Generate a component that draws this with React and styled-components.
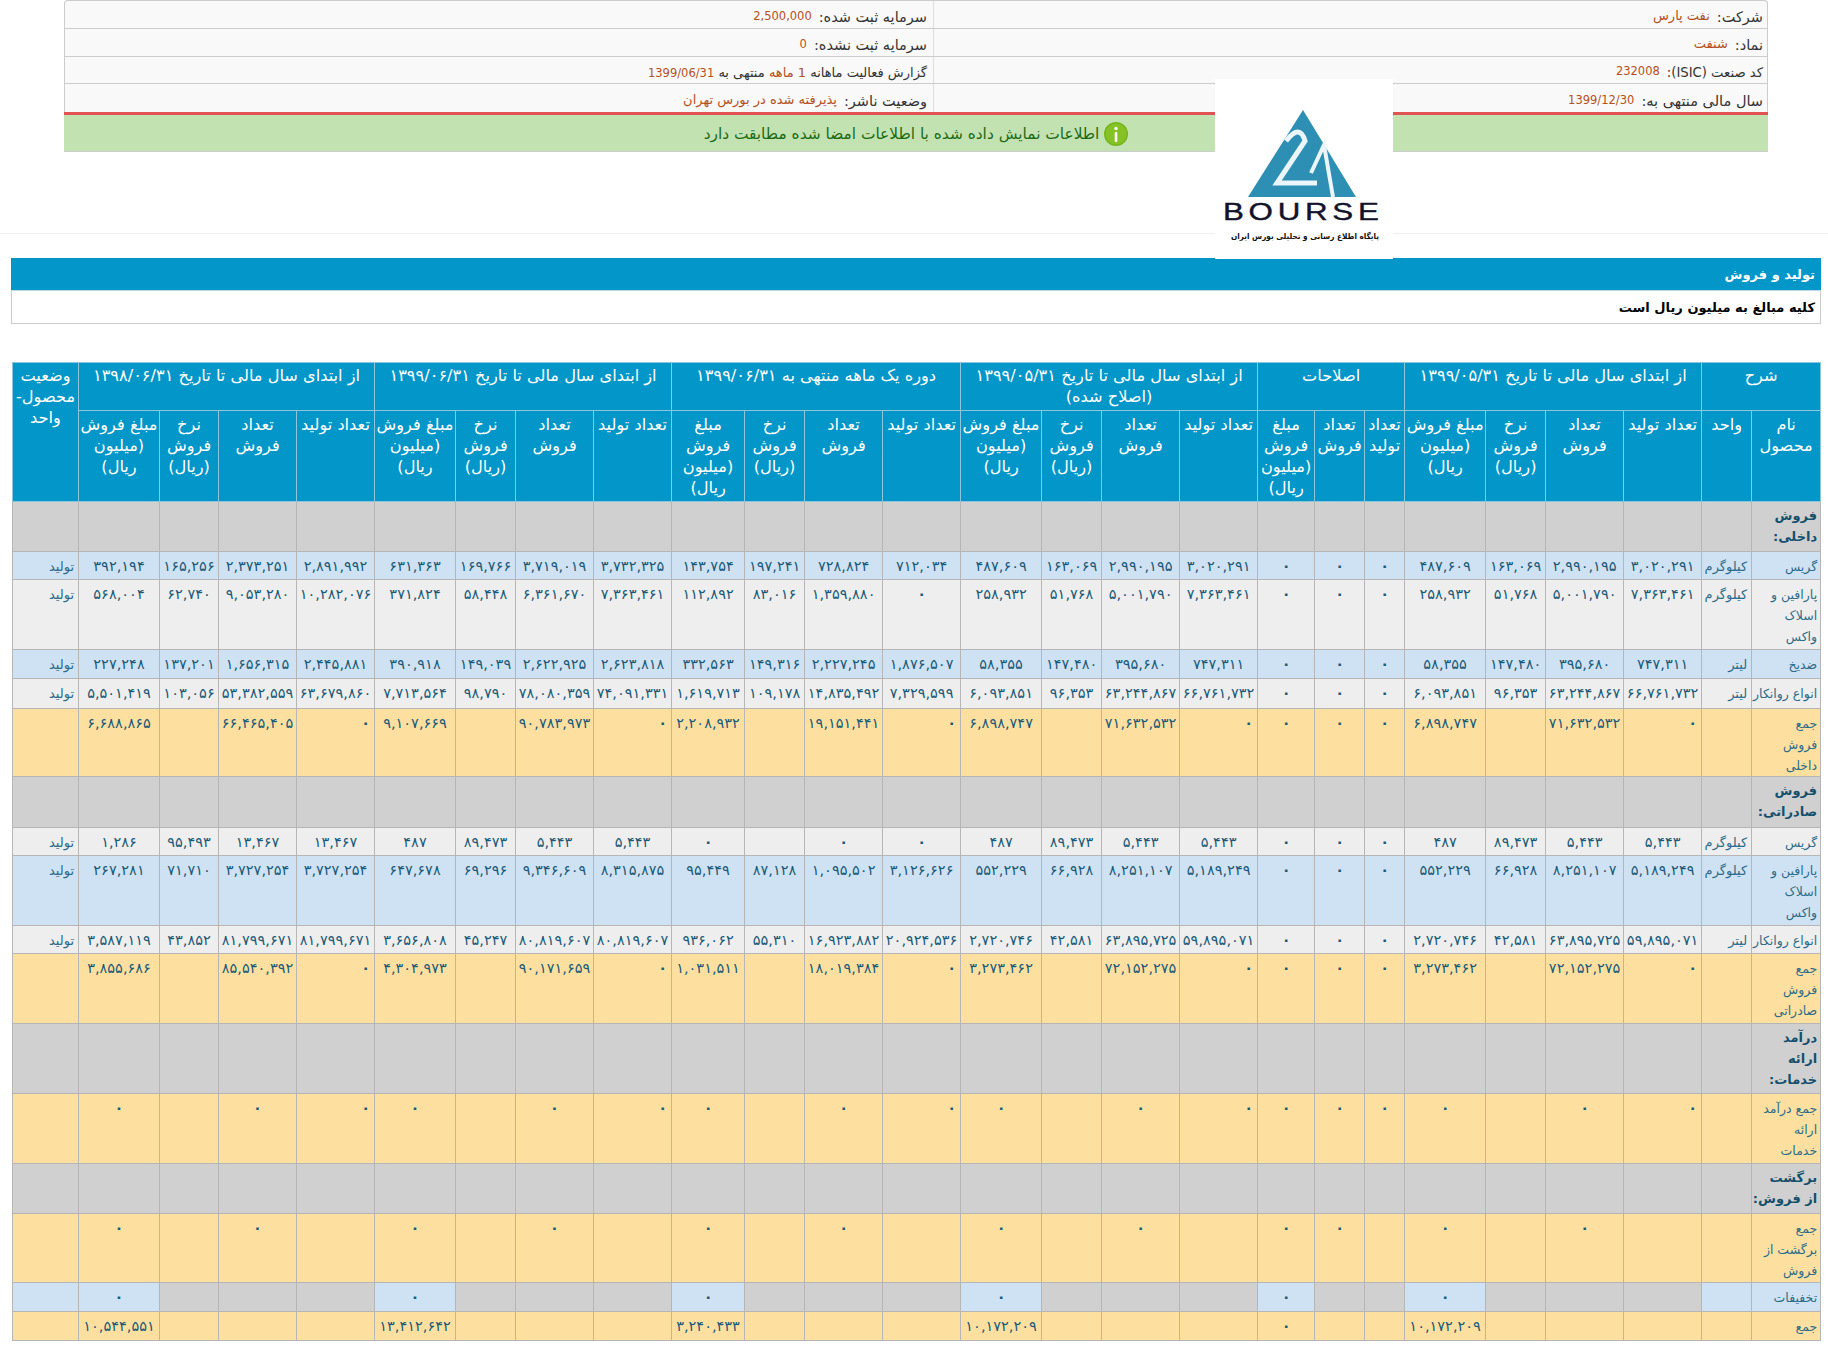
import React from "react";
import styled, { createGlobalStyle } from "styled-components";

const Global = createGlobalStyle`
  html, body { margin: 0; padding: 0; background: #fff; }
  body { font-family: "DejaVu Sans", "Noto Sans", sans-serif; }
`;

const Page = styled.div`
  position: relative;
  width: 1828px;
`;
const InfoWrap = styled.div`
  width: 1704px;
  margin-left: 64px;
`;
const InfoBox = styled.div`
  border: 1px solid #ccc;
  border-bottom: none;
  border-radius: 4px 4px 0 0;
  background: #f9f9f9;
  direction: rtl;
`;
const InfoRow = styled.div`
  display: grid;
  grid-template-columns: 834px 1fr;
  height: 27.75px;
  border-bottom: ${(p) => (p.$last ? "none" : "1px solid #ccc")};
  box-sizing: border-box;
`;
const InfoCell = styled.div`
  display: flex;
  align-items: center;
  gap: 7px;
  padding: 6px ${(p) => (p.$first ? "4px" : "6px")} 0 0;
  font-size: ${(p) => (p.$tight ? "13.2px" : "14.5px")};
  color: #333;
  white-space: nowrap;
  border-left: ${(p) => (p.$first ? "1px solid #ddd" : "none")};
`;
const InfoValue = styled.span`
  color: #b5501c;
  font-size: ${(p) => (p.$fa ? "13px" : "11.5px")};
  margin-top: -3px;
`;
const Mixed = styled.span`
  font-size: 13px;
`;
const Notice = styled.div`
  height: 35px;
  padding-top: 1px;
  border-top: 3px solid #e25353;
  border-bottom: 1px solid #ccc;
  background: #c2e2b2;
  direction: rtl;
  display: flex;
  align-items: center;
  justify-content: center;
  gap: 5px;
  color: #1c6b12;
  font-size: 15.4px;
`;
const Rule = styled.div`
  height: 1px;
  background: #eee;
  margin-top: 81px;
`;
const Logo = styled.svg`
  position: absolute;
  left: 1215px;
  top: 79px;
  width: 178px;
  height: 180px;
  background: #fff;
  z-index: 2;
`;
const Panel = styled.div`
  margin: 24px 7px 0 11px;
  direction: rtl;
`;
const PanelTitle = styled.div`
  height: 32px;
  background: #0296c9;
  color: #fff;
  font-size: 13px;
  font-weight: bold;
  line-height: 34px;
  padding-right: 6px;
`;
const PanelBody = styled.div`
  height: 34px;
  box-sizing: border-box;
  border: 1px solid #ccc;
  border-top: 1px solid #bcd9e6;
  color: #000;
  font-size: 13px;
  font-weight: bold;
  line-height: 33px;
  padding-right: 5px;
`;
const Table = styled.table`
  direction: rtl;
  margin: 38px 0 0 12px;
  width: 1808px;
  table-layout: fixed;
  border-collapse: collapse;
  font-size: 14.5px;
`;
const HeadRow = styled.tr`
  height: ${(p) => p.$h}px;
`;
const Head = styled.th`
  background: #0296c9;
  color: #fff;
  font-weight: normal;
  font-size: 16.2px;
  line-height: 21px;
  vertical-align: top;
  text-align: center;
  padding: ${(p) => (p.$top ? "2px 1px 0" : "3px 0 0")};
  border: 1px solid #8cc5dc;
  white-space: nowrap;
  overflow: hidden;
`;
const BG = { g: "#d0d0d0", b: "#cfe2f4", l: "#eeeeee", t: "#fde0a0", d: "#d0d0d0" };
const Row = styled.tr`
  height: ${(p) => p.$h}px;
`;
const Cell = styled.td`
  background: ${(p) => p.$bg};
  border: 1px solid #b6b6b6;
  padding: 4px ${(p) => (p.$align === "right" ? "4px" : "0")} 0;
  vertical-align: top;
  text-align: ${(p) => p.$align};
  color: #1a5a78;
  font-weight: ${(p) => (p.$zero ? "bold" : "normal")};
  line-height: 21px;
  white-space: nowrap;
  overflow: hidden;
`;
const LabelCell = styled(Cell)`
  font-size: 13px;
  color: #2c6c8a;
`;
const NameCell = styled(LabelCell)`
  font-size: ${(p) => (p.$group ? "13px" : "12.5px")};
  font-weight: ${(p) => (p.$group ? "bold" : "normal")};
  color: ${(p) => (p.$group ? "#14506e" : "#2c6c8a")};
  padding: ${(p) => (p.$group ? "3px" : "4px")} 3px 0 0;
`;

const widths = [69, 50, 78, 78, 60, 81, 40, 50, 57, 78, 78, 60, 81, 78, 78, 60, 73, 78, 78, 60, 81, 78, 78, 59, 81, 66];

const Z = "۰";
const ZZZ = [Z, Z, Z];
const p4 = ["تعداد تولید", ["تعداد", "فروش"], ["نرخ", "فروش", "(ریال)"], ["مبلغ فروش", "(میلیون", "ریال)"]];
const p4n = ["تعداد تولید", ["تعداد", "فروش"], ["نرخ", "فروش", "(ریال)"], ["مبلغ", "فروش", "(میلیون", "ریال)"]];
const sub = [
  ["نام", "محصول"], "واحد",
  ...p4,
  ["تعداد", "تولید"], ["تعداد", "فروش"], ["مبلغ", "فروش", "(میلیون", "ریال)"],
  ...p4, ...p4n, ...p4, ...p4,
];

const Lines = ({ v }) =>
  Array.isArray(v) ? v.map((t, i) => <React.Fragment key={i}>{i > 0 && <br />}{t}</React.Fragment>) : v;

const same = (a) => [...a, ...ZZZ, ...a];
const rows = [
  { t: "g", h: 50, n: ["فروش", "داخلی:"] },
  { t: "b", h: 28, n: "گریس", u: "کیلوگرم", s: "تولید", v: [...same(["۳,۰۲۰,۲۹۱", "۲,۹۹۰,۱۹۵", "۱۶۳,۰۶۹", "۴۸۷,۶۰۹"]), "۷۱۲,۰۳۴", "۷۲۸,۸۲۴", "۱۹۷,۲۴۱", "۱۴۳,۷۵۴", "۳,۷۳۲,۳۲۵", "۳,۷۱۹,۰۱۹", "۱۶۹,۷۶۶", "۶۳۱,۳۶۳", "۲,۸۹۱,۹۹۲", "۲,۳۷۳,۲۵۱", "۱۶۵,۲۵۶", "۳۹۲,۱۹۴"] },
  { t: "l", h: 70, n: ["پارافین و", "اسلاک", "واکس"], u: "کیلوگرم", s: "تولید", v: [...same(["۷,۳۶۳,۴۶۱", "۵,۰۰۱,۷۹۰", "۵۱,۷۶۸", "۲۵۸,۹۳۲"]), Z, "۱,۳۵۹,۸۸۰", "۸۳,۰۱۶", "۱۱۲,۸۹۲", "۷,۳۶۳,۴۶۱", "۶,۳۶۱,۶۷۰", "۵۸,۴۴۸", "۳۷۱,۸۲۴", "۱۰,۲۸۲,۰۷۶", "۹,۰۵۳,۲۸۰", "۶۲,۷۴۰", "۵۶۸,۰۰۴"] },
  { t: "b", h: 29, n: "ضدیخ", u: "لیتر", s: "تولید", v: [...same(["۷۴۷,۳۱۱", "۳۹۵,۶۸۰", "۱۴۷,۴۸۰", "۵۸,۳۵۵"]), "۱,۸۷۶,۵۰۷", "۲,۲۲۷,۲۴۵", "۱۴۹,۳۱۶", "۳۳۲,۵۶۳", "۲,۶۲۳,۸۱۸", "۲,۶۲۲,۹۲۵", "۱۴۹,۰۳۹", "۳۹۰,۹۱۸", "۲,۴۴۵,۸۸۱", "۱,۶۵۶,۳۱۵", "۱۳۷,۲۰۱", "۲۲۷,۲۴۸"] },
  { t: "l", h: 30, n: "انواع روانکار", u: "لیتر", s: "تولید", v: [...same(["۶۶,۷۶۱,۷۳۲", "۶۳,۲۴۴,۸۶۷", "۹۶,۳۵۳", "۶,۰۹۳,۸۵۱"]), "۷,۳۲۹,۵۹۹", "۱۴,۸۳۵,۴۹۲", "۱۰۹,۱۷۸", "۱,۶۱۹,۷۱۳", "۷۴,۰۹۱,۳۳۱", "۷۸,۰۸۰,۳۵۹", "۹۸,۷۹۰", "۷,۷۱۳,۵۶۴", "۶۳,۶۷۹,۸۶۰", "۵۳,۳۸۲,۵۵۹", "۱۰۳,۰۵۶", "۵,۵۰۱,۴۱۹"] },
  { t: "t", h: 68, n: ["جمع", "فروش", "داخلی"], v: [...same([Z, "۷۱,۶۳۲,۵۳۲", "", "۶,۸۹۸,۷۴۷"]), Z, "۱۹,۱۵۱,۴۴۱", "", "۲,۲۰۸,۹۳۲", Z, "۹۰,۷۸۳,۹۷۳", "", "۹,۱۰۷,۶۶۹", Z, "۶۶,۴۶۵,۴۰۵", "", "۶,۶۸۸,۸۶۵"] },
  { t: "g", h: 51, n: ["فروش", "صادراتی:"] },
  { t: "l", h: 28, n: "گریس", u: "کیلوگرم", s: "تولید", v: [...same(["۵,۴۴۳", "۵,۴۴۳", "۸۹,۴۷۳", "۴۸۷"]), Z, Z, "", Z, "۵,۴۴۳", "۵,۴۴۳", "۸۹,۴۷۳", "۴۸۷", "۱۳,۴۶۷", "۱۳,۴۶۷", "۹۵,۴۹۳", "۱,۲۸۶"] },
  { t: "b", h: 70, n: ["پارافین و", "اسلاک", "واکس"], u: "کیلوگرم", s: "تولید", v: [...same(["۵,۱۸۹,۲۴۹", "۸,۲۵۱,۱۰۷", "۶۶,۹۲۸", "۵۵۲,۲۲۹"]), "۳,۱۲۶,۶۲۶", "۱,۰۹۵,۵۰۲", "۸۷,۱۲۸", "۹۵,۴۴۹", "۸,۳۱۵,۸۷۵", "۹,۳۴۶,۶۰۹", "۶۹,۲۹۶", "۶۴۷,۶۷۸", "۳,۷۲۷,۲۵۴", "۳,۷۲۷,۲۵۴", "۷۱,۷۱۰", "۲۶۷,۲۸۱"] },
  { t: "l", h: 28, n: "انواع روانکار", u: "لیتر", s: "تولید", v: [...same(["۵۹,۸۹۵,۰۷۱", "۶۳,۸۹۵,۷۲۵", "۴۲,۵۸۱", "۲,۷۲۰,۷۴۶"]), "۲۰,۹۲۴,۵۳۶", "۱۶,۹۲۳,۸۸۲", "۵۵,۳۱۰", "۹۳۶,۰۶۲", "۸۰,۸۱۹,۶۰۷", "۸۰,۸۱۹,۶۰۷", "۴۵,۲۴۷", "۳,۶۵۶,۸۰۸", "۸۱,۷۹۹,۶۷۱", "۸۱,۷۹۹,۶۷۱", "۴۳,۸۵۲", "۳,۵۸۷,۱۱۹"] },
  { t: "t", h: 70, n: ["جمع", "فروش", "صادراتی"], v: [...same([Z, "۷۲,۱۵۲,۲۷۵", "", "۳,۲۷۳,۴۶۲"]), Z, "۱۸,۰۱۹,۳۸۴", "", "۱,۰۳۱,۵۱۱", Z, "۹۰,۱۷۱,۶۵۹", "", "۴,۳۰۴,۹۷۳", Z, "۸۵,۵۴۰,۳۹۲", "", "۳,۸۵۵,۶۸۶"] },
  { t: "g", h: 70, n: ["درآمد", "ارائه", "خدمات:"] },
  { t: "t", h: 70, n: ["جمع درآمد", "ارائه", "خدمات"], v: [...same([Z, Z, "", Z]), Z, Z, "", Z, Z, Z, "", Z, Z, Z, "", Z] },
  { t: "g", h: 50, n: ["برگشت", "از فروش:"] },
  { t: "t", h: 69, n: ["جمع", "برگشت از", "فروش"], v: ["", Z, "", Z, "", Z, Z, "", Z, "", Z, "", Z, "", Z, "", Z, "", Z, "", Z, "", Z] },
  { t: "d", h: 29, n: "تخفیفات", blue: true, v: ["", "", "", Z, "", "", Z, "", "", "", Z, "", "", "", Z, "", "", "", Z, "", "", "", Z] },
  { t: "t", h: 29, n: "جمع", v: ["", "", "", "۱۰,۱۷۲,۲۰۹", "", "", Z, "", "", "", "۱۰,۱۷۲,۲۰۹", "", "", "", "۳,۲۴۰,۴۳۳", "", "", "", "۱۳,۴۱۲,۶۴۲", "", "", "", "۱۰,۵۴۴,۵۵۱"] },
];

// indices (inside the 23 value cells) holding "تعداد تولید" of a full 4-column block
const TOLID = new Set([0, 7, 11, 15, 19]);

const Info = [
  [["شرکت:", "نفت پارس", true], ["سرمایه ثبت شده:", "2,500,000"]],
  [["نماد:", "شنفت", true], ["سرمایه ثبت نشده:", "0"]],
  [["کد صنعت (ISIC):", "232008", false, true], null],
  [["سال مالی منتهی به:", "1399/12/30"], ["وضعیت ناشر:", "پذیرفته شده در بورس تهران", true]],
];

export default function App() {
  return (
    <Page>
      <Global />
      <InfoWrap>
        <InfoBox>
          {Info.map((r, i) => (
            <InfoRow key={i} $last={i === 3}>
              <InfoCell $first $tight={r[0][3]}>
                {r[0][0]}
                <InfoValue $fa={r[0][2]}>{r[0][1]}</InfoValue>
              </InfoCell>
              <InfoCell>
                {r[1] ? (
                  <>
                    {r[1][0]}
                    <InfoValue $fa={r[1][2]}>{r[1][1]}</InfoValue>
                  </>
                ) : (
                  <Mixed>
                    گزارش فعالیت ماهانه <InfoValue $fa>1 ماهه</InfoValue> منتهی به <InfoValue>1399/06/31</InfoValue>
                  </Mixed>
                )}
              </InfoCell>
            </InfoRow>
          ))}
        </InfoBox>
        <Notice>
          <svg width="24" height="24" viewBox="0 0 24 24">
            <circle cx="12" cy="12" r="12" fill="#76b41c" />
            <circle cx="12" cy="12" r="10.5" fill="#84c225" />
            <rect x="10.7" y="10" width="2.6" height="10" rx="1" fill="#fff" />
            <circle cx="12" cy="6.5" r="1.7" fill="#fff" />
          </svg>
          اطلاعات نمایش داده شده با اطلاعات امضا شده مطابقت دارد
        </Notice>
      </InfoWrap>
      <Logo viewBox="0 0 178 180">
        <path d="M88 31 L141 118 L33 118 Z" fill="#2e8fb4" />
        <path d="M71 62 Q85 44 90 62 L62 104 L102 104" fill="none" stroke="#eaf6fb" strokeWidth="5" />
        <path d="M96 94 L109 66 L118 118" fill="none" stroke="#eaf6fb" strokeWidth="4" />
        <text transform="translate(8 141) scale(1.36 1)" fontFamily='"Liberation Sans", sans-serif' fontSize="23" letterSpacing="3.5" fill="#12122a" stroke="#12122a" strokeWidth="0.4">BOURSE</text>
        <text x="164" y="160" direction="rtl" fontFamily='"DejaVu Sans", sans-serif' fontSize="8" fontWeight="bold" fill="#111" textLength="148" lengthAdjust="spacingAndGlyphs">پایگاه اطلاع رسانی و تحلیلی بورس ایران</text>
      </Logo>
      <Rule />
      <Panel>
        <PanelTitle>تولید و فروش</PanelTitle>
        <PanelBody>کلیه مبالغ به میلیون ریال است</PanelBody>
      </Panel>
      <Table>
        <colgroup>
          {widths.map((w, i) => (
            <col key={i} style={{ width: w }} />
          ))}
        </colgroup>
        <thead>
          <HeadRow $h={48}>
            <Head $top colSpan={2}>شرح</Head>
            <Head $top colSpan={4}>از ابتدای سال مالی تا تاریخ ۱۳۹۹/۰۵/۳۱</Head>
            <Head $top colSpan={3}>اصلاحات</Head>
            <Head $top colSpan={4}>از ابتدای سال مالی تا تاریخ ۱۳۹۹/۰۵/۳۱<br />(اصلاح شده)</Head>
            <Head $top colSpan={4}>دوره یک ماهه منتهی به ۱۳۹۹/۰۶/۳۱</Head>
            <Head $top colSpan={4}>از ابتدای سال مالی تا تاریخ ۱۳۹۹/۰۶/۳۱</Head>
            <Head $top colSpan={4}>از ابتدای سال مالی تا تاریخ ۱۳۹۸/۰۶/۳۱</Head>
            <Head $top rowSpan={2}>وضعیت<br />محصول-<br />واحد</Head>
          </HeadRow>
          <HeadRow $h={91}>
            {sub.map((s, i) => (
              <Head key={i}><Lines v={s} /></Head>
            ))}
          </HeadRow>
        </thead>
        <tbody>
          {rows.map((r, i) => {
            const bg = BG[r.t];
            const vals = r.v || Array(23).fill("");
            const edge = r.blue ? BG.b : bg;
            return (
              <Row key={i} $h={r.h}>
                <NameCell $bg={edge} $align="right" $group={r.t === "g"}><Lines v={r.n} /></NameCell>
                <LabelCell $bg={edge} $align="right">{r.u || ""}</LabelCell>
                {vals.map((v, j) => (
                  <Cell
                    key={j}
                    $bg={r.t === "d" && v ? BG.b : bg}
                    $zero={v === Z}
                    $align={r.t === "t" && v === Z && TOLID.has(j) ? "right" : "center"}
                  >
                    {v}
                  </Cell>
                ))}
                <LabelCell $bg={edge} $align="right">{r.s || ""}</LabelCell>
              </Row>
            );
          })}
        </tbody>
      </Table>
    </Page>
  );
}
